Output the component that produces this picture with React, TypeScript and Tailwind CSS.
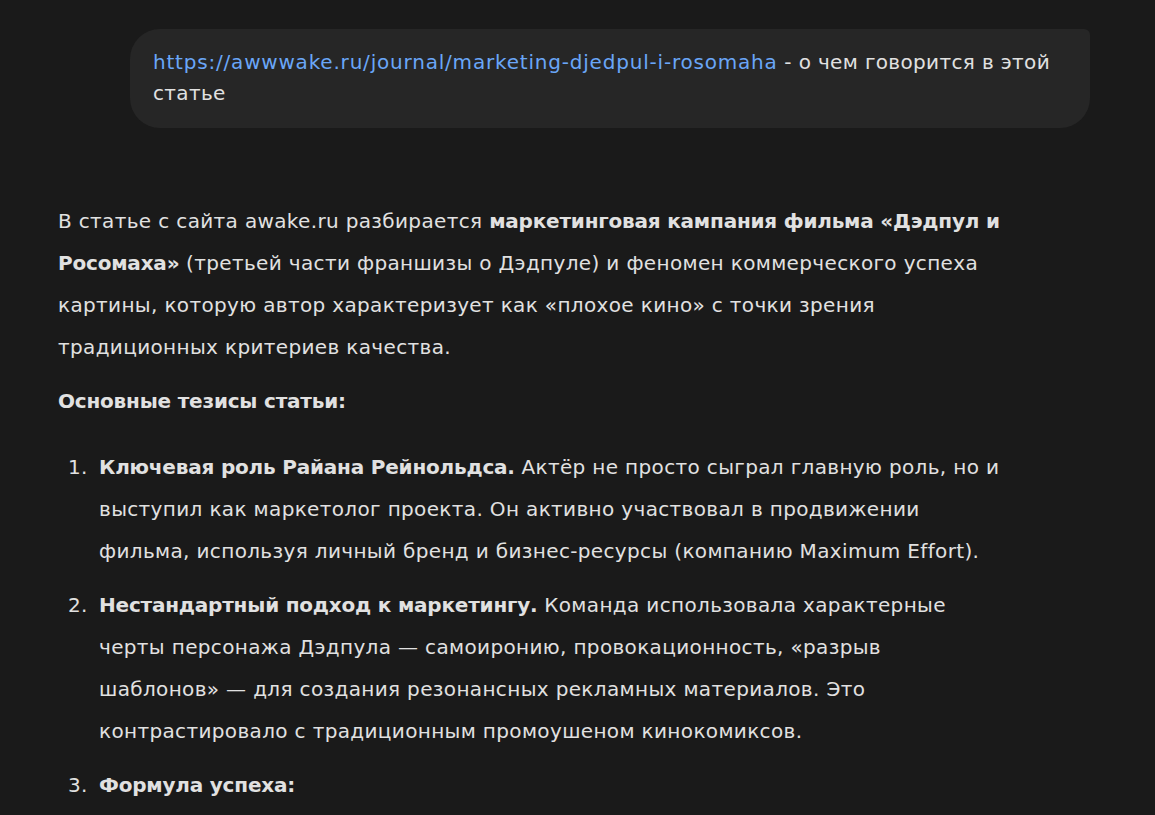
import React from 'react';

const items = [
  {
    title: 'Ключевая роль Райана Рейнольдса.',
    lines: [
      ' Актёр не просто сыграл главную роль, но и',
      'выступил как маркетолог проекта. Он активно участвовал в продвижении',
      'фильма, используя личный бренд и бизнес-ресурсы (компанию Maximum Effort).',
    ],
  },
  {
    title: 'Нестандартный подход к маркетингу.',
    lines: [
      ' Команда использовала характерные',
      'черты персонажа Дэдпула — самоиронию, провокационность, «разрыв',
      'шаблонов» — для создания резонансных рекламных материалов. Это',
      'контрастировало с традиционным промоушеном кинокомиксов.',
    ],
  },
  {
    title: 'Формула успеха:',
    lines: [],
  },
];

const App: React.FC = () => {
  return (
    <div className="min-h-[815px] w-full overflow-hidden bg-[#1a1a1a] font-['DejaVu_Sans',sans-serif] tracking-[0.35px] text-[#e1e1e1]">
      {/* user message */}
      <div className="flex justify-end pt-[29px] pr-[65px]">
        <div className="w-[960px] rounded-[30px] rounded-tr-[6px] bg-[#262626] pl-[23px] pr-6 pt-[18px] pb-[19px] text-[20px] leading-[31px]">
          <a className="tracking-[0.8px] text-[#6aa6f8]">https://awwwake.ru/journal/marketing-djedpul-i-rosomaha</a>
          <span> - о чем говорится в этой</span>
          <br />
          <span>статье</span>
        </div>
      </div>

      {/* answer */}
      <div className="pl-[58px] pt-[72px] text-[20px] leading-[42px]">
        <p>
          В статье с сайта awake.ru разбирается{' '}
          <b className="font-bold tracking-[-0.2px]">маркетинговая кампания фильма «Дэдпул и</b>
          <br />
          <b className="font-bold tracking-[-0.2px]">Росомаха»</b> (третьей части франшизы о Дэдпуле) и феномен коммерческого успеха
          <br />
          картины, которую автор характеризует как «плохое кино» с точки зрения
          <br />
          традиционных критериев качества.
        </p>
        <p className="mt-3 font-bold tracking-[-0.2px]">Основные тезисы статьи:</p>
        <ol className="mt-6 flex flex-col gap-3">
          {items.map((it, i) => (
            <li key={i} className="flex">
              <span className="w-[41px] shrink-0 pl-[10px]">{i + 1}.</span>
              <div>
                <b className="font-bold tracking-[-0.2px]">{it.title}</b>
                {it.lines.map((l, j) => (
                  <React.Fragment key={j}>
                    {j > 0 && <br />}
                    {l}
                  </React.Fragment>
                ))}
              </div>
            </li>
          ))}
        </ol>
      </div>
    </div>
  );
};

export default App;
